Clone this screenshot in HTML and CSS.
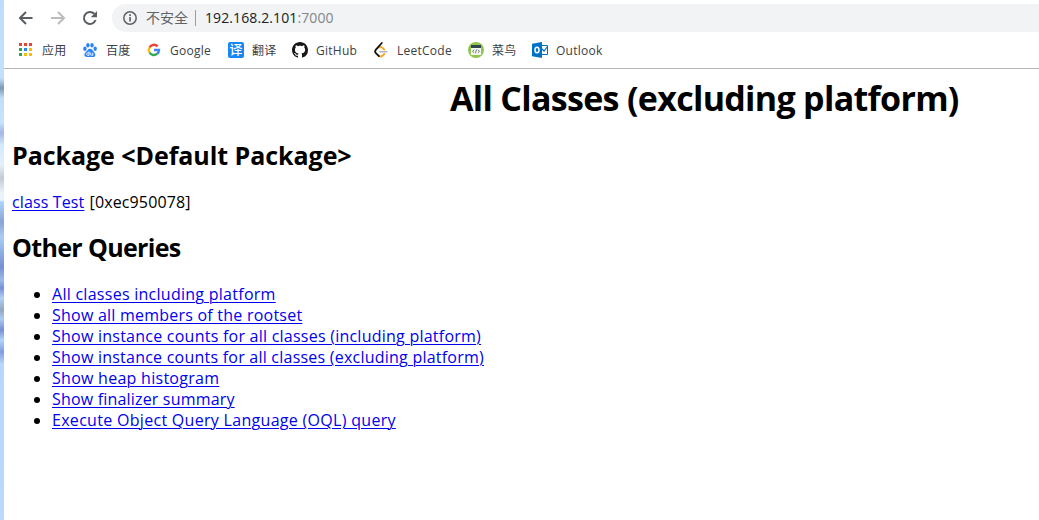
FILE: index.html
```html
<!DOCTYPE html>
<html lang="en">
<head>
<meta charset="utf-8">
<title>All Classes (excluding platform)</title>
<link rel="stylesheet" href="styles.css">
</head>
<body>
<div class="desktop-edge"></div>
<div class="browser">
  <div class="toolbar">
    <svg class="nav" viewBox="0 0 16 16"><path d="M14.5 8H2.5M8 2L2 8l6 6" fill="none" stroke="#5a5d61" stroke-width="2"/></svg>
    <svg class="nav" viewBox="0 0 16 16"><path d="M1 8h12.500M8 2l6 6-6 6" fill="none" stroke="#babcbe" stroke-width="2"/></svg>
    <svg class="nav" viewBox="0 0 16 16"><path d="M13.600 10A6 6 0 1 1 12.300 3.800" fill="none" stroke="#5a5d61" stroke-width="2"/><path d="M15 1v6.200H8.800z" fill="#5a5d61"/></svg>
    <div class="omnibox">
      <svg class="info" viewBox="0 0 14 14"><circle cx="7" cy="7" r="6.200" fill="none" stroke="#5f6368" stroke-width="1.500"/><path d="M6.200 6h1.700v4.500H6.200zM6.200 3.300h1.700v1.600H6.200z" fill="#5f6368"/></svg>
      <span class="insecure">不安全</span>
      <span class="divider"></span>
      <span class="url">192.168.2.101<span class="port">:7000</span></span>
    </div>
  </div>
  <div class="bookmarks">
    <a class="bm apps"><svg viewBox="0 0 16 16"><path fill="#ea4335" d="M1 1h3v3H1zM6 1h3v3H6zM11 1h3v3h-3z"/><path fill="#34a05a" d="M1 6h3v3H1zM1 11h3v3H1z"/><path fill="#2489f5" d="M6 6h3v3H6z"/><path fill="#fbbc05" d="M11 6h3v3h-3zM6 11h3v3H6zM11 11h3v3h-3z"/></svg><span>应用</span></a>
    <a class="bm baidu"><svg viewBox="0 0 16 16"><g fill="#2f82f6"><ellipse cx="2.900" cy="6.800" rx="1.700" ry="2.200"/><ellipse cx="5.900" cy="3.300" rx="1.700" ry="2.300"/><ellipse cx="10" cy="3.300" rx="1.700" ry="2.300"/><ellipse cx="13.200" cy="6.800" rx="1.700" ry="2.200"/><path d="M8 6.700c2 0 2.500 1.800 4 3.200 1.800 1.600 2 5.100-1 5.100H5c-3 0-3.300-3-1.400-4.700C5.500 8.700 6 6.700 8 6.700z"/></g><path d="M7.100 9.500v3.800H5.600q-1-.2-1-1.200t1-1.200h1.500M8.700 10.700v2q0 .6.700.6h1.400v-2.600" fill="none" stroke="#fff" stroke-width=".9"/></svg><span>百度</span></a>
    <a class="bm google"><svg viewBox="0 0 16 16"><g fill="none" stroke-width="2.400"><path stroke="#ea4335" d="M3.500 5.500A5 5 0 0 1 11.600 4.400"/><path stroke="#fbbc05" d="M3.500 5.500a5 5 0 0 0 0 5"/><path stroke="#34a853" d="M3.500 10.500a5 5 0 0 0 7.700 1.200"/><path stroke="#4285f4" d="M8 8h5a5 5 0 0 1-1.800 3.800"/></g></svg><span>Google</span></a>
    <a class="bm trans"><b class="yi">译</b><span>翻译</span></a>
    <a class="bm github"><svg viewBox="0 0 16 16"><path fill="#191717" d="M8 0C3.580 0 0 3.580 0 8c0 3.540 2.290 6.530 5.470 7.590.4.070.55-.17.55-.38 0-.19-.01-.82-.01-1.490-2.010.37-2.530-.49-2.690-.94-.09-.23-.48-.94-.82-1.130-.28-.15-.68-.52-.01-.53.63-.01 1.080.58 1.230.82.72 1.210 1.870.87 2.330.66.07-.52.28-.87.51-1.070-1.780-.2-3.640-.89-3.640-3.950 0-.87.31-1.590.82-2.150-.08-.2-.36-1.020.08-2.120 0 0 .67-.21 2.200.82.64-.18 1.320-.27 2-.27s1.360.09 2 .27c1.530-1.040 2.200-.82 2.200-.82.44 1.100.16 1.920.08 2.120.51.56.82 1.270.82 2.150 0 3.070-1.870 3.750-3.650 3.950.29.25.54.73.54 1.480 0 1.070-.01 1.930-.01 2.200 0 .21.15.46.55.38A8.010 8.010 0 0 0 16 8c0-4.420-3.580-8-8-8z"/></svg><span>GitHub</span></a>
    <a class="bm leet"><svg viewBox="0 0 16 16"><g fill="none" stroke-width="1.800" stroke-linecap="round"><path stroke="#f7a41d" d="M5.800 5.600q1.700-1.500 3.400.1l2 1.800M11.300 12l-1.900 1.800q-1.800 1.500-3.500 0"/><path stroke="#111" d="M8.800 1L2.900 7.600q-1.500 1.900 0 3.500l3 3"/><path stroke="#b3b3b3" stroke-width="1.500" d="M6.800 9.800h7"/></g></svg><span>LeetCode</span></a>
    <a class="bm runoob"><svg viewBox="0 0 16 16"><circle cx="8" cy="8" r="8" fill="#91c54f"/><path fill="#f3f6ee" d="M3 3h10v10H3z"/><path fill="#304451" d="M3 3h10v3H3z"/><path d="M6.200 7.800L4.500 9.300l1.700 1.500M9.800 7.800l1.700 1.500-1.700 1.500M8.600 7.500l-1.200 3.600" stroke="#52606a" stroke-width=".8" fill="none"/></svg><span>菜鸟</span></a>
    <a class="bm outlook"><svg viewBox="0 0 16 16"><path fill="#fff" stroke="#0072c6" d="M8 3.500h7.500v9H8z"/><path d="M9 6l3 3 3.500-4.500" fill="none" stroke="#0072c6" stroke-width="1.200"/><path fill="#0072c6" d="M0 1.800L10 0v16L0 14.200z"/><ellipse cx="5" cy="8" rx="2" ry="2.800" fill="none" stroke="#fff" stroke-width="1.500"/></svg><span>Outlook</span></a>
  </div>
  <main class="page">
    <h1>All Classes (excluding platform)</h1>
    <h2 class="package">Package &lt;Default Package&gt;</h2>
    <p><a class="link cls" href="#">class Test</a> <span class="addr">[0xec950078]</span></p>
    <h2 class="queries">Other Queries</h2>
    <ul>
      <li><a class="link q1" href="#">All classes including platform</a></li>
      <li><a class="link q2" href="#">Show all members of the rootset</a></li>
      <li><a class="link q3" href="#">Show instance counts for all classes (including platform)</a></li>
      <li><a class="link q4" href="#">Show instance counts for all classes (excluding platform)</a></li>
      <li><a class="link q5" href="#">Show heap histogram</a></li>
      <li><a class="link q6" href="#">Show finalizer summary</a></li>
      <li><a class="link q7" href="#">Execute Object Query Language (OQL) query</a></li>
    </ul>
  </main>
</div>
</body>
</html>
```
FILE: styles.css
```css
* { box-sizing: border-box; }
body { margin: 0; height: 520px; display: flex; overflow: hidden; background: #fff; color: #000; font-family: "Open Sans", "Noto Sans CJK SC", sans-serif; }
.desktop-edge { width: 4px; flex: none; background: linear-gradient(#bedcfb 0, #c3e0ff 78px, #7e98b4 88px, #c0ddfa 98px, #c8e3ff 122px, #a4b7e6 133px, #d4e9fd 145px, #e4f0fc 165px, #c2cad3 178px, #eaf3fc 193px, #eaf3fc 200px, #abd4fb 202px, #8aa3d5 222px, #aacdf5 237px, #7590d3 267px, #9bbbea 280px, #7691d8 288px, #b1d1f4 298px, #95a5c2 310px, #a9cbf3 319px, #788fd5 330px, #b0d4fa 340px, #7f9de0 352px, #b5d8fc 364px, #b9dafd 520px); }
.browser { flex: 1; min-width: 0; }
.toolbar { height: 36px; padding: 4px 0 4px 14px; display: flex; align-items: center; }
.nav { width: 16px; height: 16px; flex: none; margin-right: 16px; }
.nav:nth-child(3) { margin-right: 14px; }
.omnibox { flex: 1; height: 28px; background: #f1f3f4; border-radius: 14px 0 0 14px; display: flex; align-items: center; padding-left: 11px; font-size: 14px; color: #202124; }
.info { width: 14px; height: 14px; margin-right: 9px; }
.insecure { color: #5f6368; line-height: 20px; }
.divider { width: 1px; height: 16px; background: #9b9ea1; margin: 0 9px 0 7px; }
.url { line-height: 20px; letter-spacing: .1px; }
.port { color: #80868b; }
.bookmarks { height: 33px; border-bottom: 1px solid #b6b6b6; padding: 0 0 4px 14px; display: flex; align-items: center; font-size: 12px; color: #3c4043; }
.bm { display: flex; align-items: center; gap: 8px; white-space: nowrap; flex: none; }
.bm svg { width: 16px; height: 16px; flex: none; }
.bm span { line-height: 16px; padding-top: 2px; letter-spacing: .25px; }
.apps { width: 64px; }
.baidu { width: 64px; }
.google { width: 82px; }
.trans { width: 64px; }
.github { width: 81px; }
.leet { width: 95px; }
.runoob { width: 64px; }
.yi { width: 16px; height: 16px; border-radius: 2px; background: #1688f5; color: #fff; font-size: 13px; line-height: 15px; text-align: center; font-weight: 500; }
.page { padding: 8px; font-size: 16px; line-height: 21px; }
h1, h2 { font-weight: 700; white-space: nowrap; }
h1 { margin: 0 0 19px; padding-left: 438px; height: 43px; line-height: 43px; font-size: 34px; letter-spacing: -.69px; }
h2 { margin: 0; height: 32px; line-height: 32px; font-size: 25px; }
.package { letter-spacing: -.05px; }
.queries { letter-spacing: -.65px; }
p { margin: 21px 0 18px; }
ul { margin: 21px 0 0; padding-left: 40px; }
.link { color: #0000ee; text-decoration: underline; text-decoration-thickness: 1px; text-underline-offset: 2px; letter-spacing: .24px; }
.cls { letter-spacing: .13px; }
.addr { letter-spacing: .12px; margin-left: 1px; }
.q1, .q5 { letter-spacing: .27px; }
.q2, .q4 { letter-spacing: .23px; }
.q6 { letter-spacing: .18px; }
.q7 { letter-spacing: .3px; }
```
